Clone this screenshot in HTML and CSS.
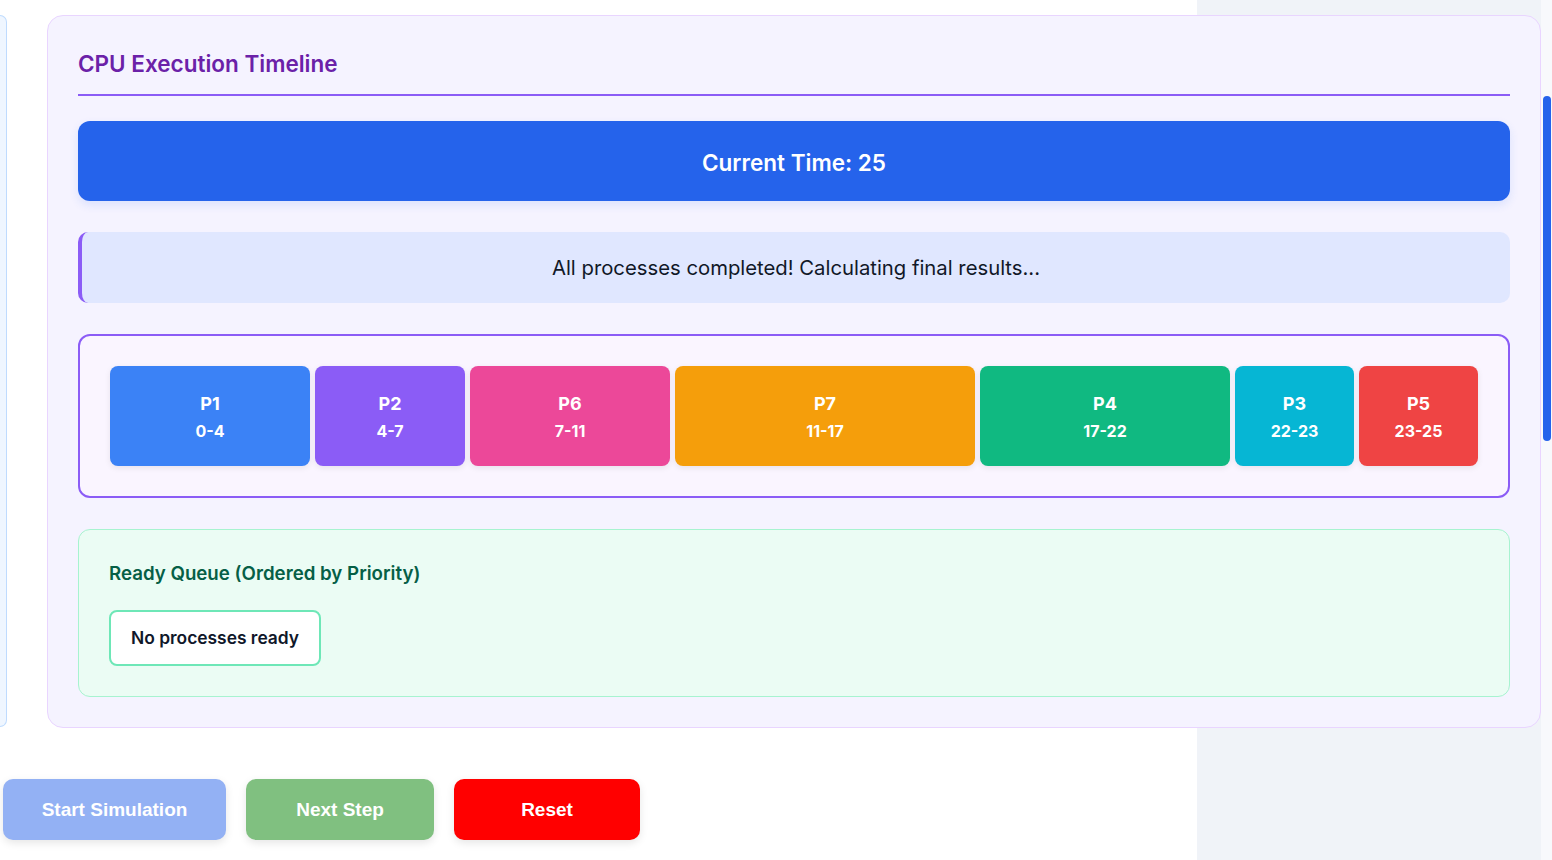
FILE: index.html
```html
<!DOCTYPE html>
<html lang="en">
<head>
<meta charset="utf-8">
<title>CPU Execution Timeline</title>
<link rel="stylesheet" href="styles.css">
</head>
<body>
<div class="page">
  <div class="main">
    <div class="columns">
      <div class="stub"></div>
      <section class="card">
        <h2 class="card-title">CPU Execution Timeline</h2>
        <div class="current-time">Current Time: 25</div>
        <div class="message">All processes completed! Calculating final results...</div>
        <div class="gantt">
          <div class="block c-p1" style="width:200px"><span class="pid">P1</span><span class="range">0-4</span></div>
          <div class="block c-p2" style="width:150px"><span class="pid">P2</span><span class="range">4-7</span></div>
          <div class="block c-p6" style="width:200px"><span class="pid">P6</span><span class="range">7-11</span></div>
          <div class="block c-p7" style="width:300px"><span class="pid">P7</span><span class="range">11-17</span></div>
          <div class="block c-p4" style="width:250px"><span class="pid">P4</span><span class="range">17-22</span></div>
          <div class="block c-p3" style="width:119px"><span class="pid">P3</span><span class="range">22-23</span></div>
          <div class="block c-p5" style="width:119px"><span class="pid">P5</span><span class="range">23-25</span></div>
        </div>
        <div class="queue">
          <h3 class="queue-title">Ready Queue (Ordered by Priority)</h3>
          <div class="queue-items">
            <div class="queue-empty">No processes ready</div>
          </div>
        </div>
      </section>
    </div>
    <div class="controls">
      <button class="btn btn-start">Start Simulation</button>
      <button class="btn btn-next">Next Step</button>
      <button class="btn btn-reset">Reset</button>
    </div>
  </div>
  <div class="scrollbar"><div class="thumb"></div></div>
</div>
</body>
</html>
```
FILE: styles.css
```css
* { box-sizing: border-box; }
html, body { margin: 0; padding: 0; }
body {
  font-family: Inter, "Noto Sans", sans-serif;
  background: #ffffff;
  overflow: hidden;
}
.page {
  display: flex;
  height: 860px;
  background: linear-gradient(to right, #ffffff 0, #ffffff 1197px, #f0f3f8 1197px);
}
.main {
  flex: 1;
  display: flex;
  flex-direction: column;
  padding-top: 15px;
}
.columns {
  display: flex;
  align-items: stretch;
  gap: 40px;
}
.stub {
  width: 7px;
  background: #eff6ff;
  border: 1px solid #bfdbfe;
  border-left: none;
  border-radius: 0 16px 16px 0;
  margin-bottom: 1px;
}
.card {
  width: 1494px;
  background: #f5f3ff;
  border: 1px solid #e9d5ff;
  border-radius: 16px;
  padding: 30px;
  display: flex;
  flex-direction: column;
}
.card-title {
  margin: 0 0 25px;
  font-size: 22.5px;
  line-height: 36px;
  font-weight: 600;
  color: #6b21a8;
  padding-bottom: 12px;
  border-bottom: 2px solid #8b5cf6;
}
.current-time {
  height: 80px;
  background: #2563eb;
  color: #ffffff;
  border-radius: 12px;
  display: flex;
  align-items: center;
  justify-content: center;
  font-size: 22.5px;
  font-weight: 600;
  padding-top: 2px;
  box-shadow: 0 4px 10px rgba(37, 99, 235, 0.12);
  margin-bottom: 31px;
}
.message {
  height: 71px;
  background: #e0e7ff;
  border-left: 4px solid #8b5cf6;
  border-radius: 10px;
  display: flex;
  align-items: center;
  justify-content: center;
  font-size: 20.3px;
  color: #111827;
  margin-bottom: 31px;
}
.gantt {
  border: 2px solid #8b5cf6;
  border-radius: 12px;
  background: #faf5ff;
  padding: 30px;
  display: flex;
  gap: 5px;
  margin-bottom: 31px;
}
.block {
  height: 100px;
  border-radius: 8px;
  display: flex;
  flex-direction: column;
  align-items: center;
  justify-content: center;
  padding-top: 2px;
  color: #ffffff;
  box-shadow: 0 2px 6px rgba(0, 0, 0, 0.08);
  flex-shrink: 1;
}
.pid { font-size: 18px; font-weight: 700; line-height: 26px; }
.range { font-size: 16px; font-weight: 700; line-height: 24px; margin-top: 2px; }
.c-p1 { background: #3b82f6; }
.c-p2 { background: #8b5cf6; }
.c-p6 { background: #ec4899; }
.c-p7 { background: #f59e0b; }
.c-p4 { background: #10b981; }
.c-p3 { background: #06b6d4; }
.c-p5 { background: #ef4444; }
.queue {
  background: #ebfcf4;
  border: 1px solid #a7f3d0;
  border-radius: 12px;
  padding: 30px;
}
.queue-title {
  margin: 0 0 22px;
  font-size: 18.7px;
  line-height: 28px;
  font-weight: 600;
  color: #065f46;
}
.queue-items { display: flex; }
.queue-empty {
  background: #ffffff;
  border: 2px solid #6ee7b7;
  border-radius: 8px;
  padding: 14px 20px;
  font-size: 17.4px;
  line-height: 24px;
  font-weight: 600;
  color: #0f172a;
}
.controls {
  display: flex;
  gap: 20px;
  padding-left: 3px;
  margin-top: 51px;
}
.btn {
  height: 61px;
  border: none;
  border-radius: 10px;
  color: #ffffff;
  font-family: "Liberation Sans", Arial, sans-serif;
  font-weight: 700;
  font-size: 19px;
  box-shadow: 0 3px 8px rgba(0, 0, 0, 0.1);
  padding: 0;
}
.btn-start { width: 223px; background: #93b1f4; }
.btn-next { width: 188px; background: #80c080; }
.btn-reset { width: 186px; background: #ff0000; }
.scrollbar {
  width: 11px;
  background: #f8f9fc;
  padding: 96px 1px 0 2px;
}
.thumb {
  height: 345px;
  background: #2563eb;
  border-radius: 4px;
}
```
